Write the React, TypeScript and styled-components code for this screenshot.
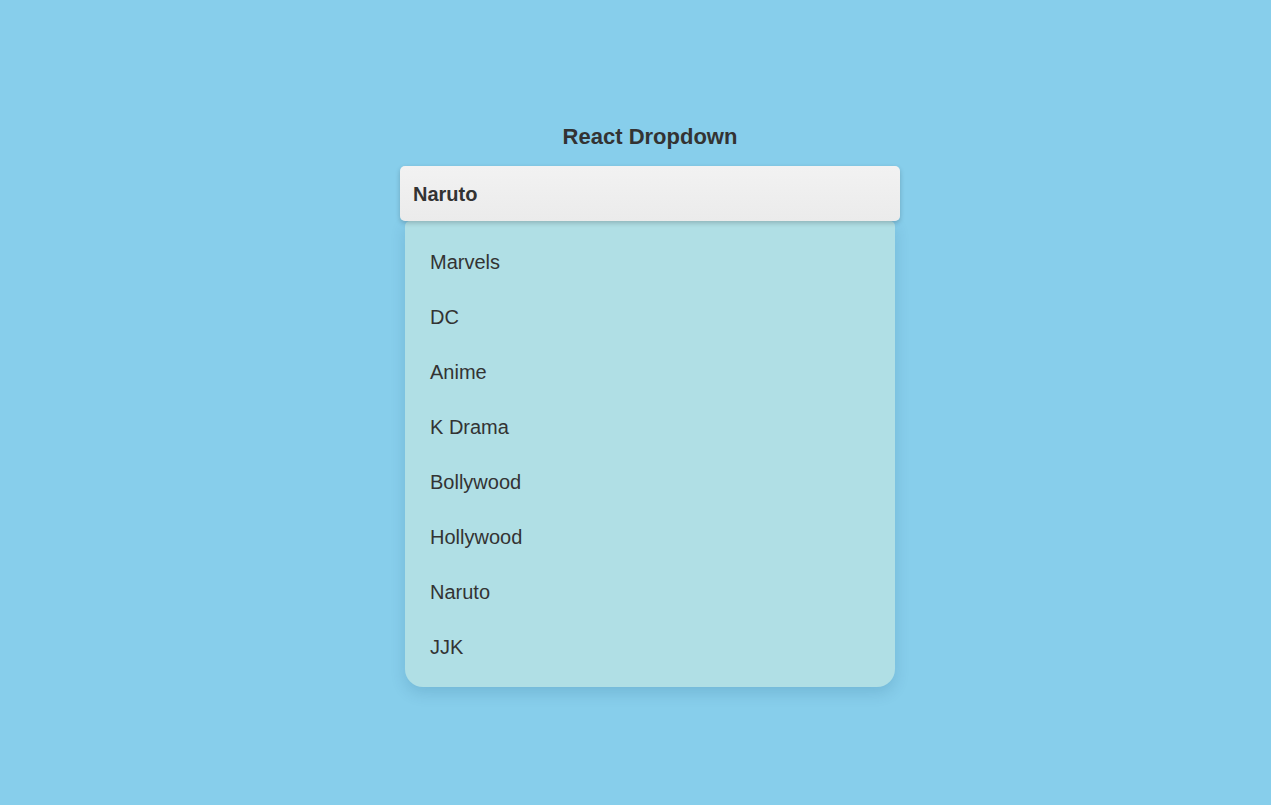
import React, { useState } from "react";
import styled, { createGlobalStyle } from "styled-components";

const Global = createGlobalStyle`
  html, body { margin: 0; padding: 0; background: #87ceeb; }
  body { font-family: "Liberation Sans", Arial, sans-serif; color: #333; min-height: 805px; }
`;

const Page = styled.div`
  display: flex;
  justify-content: center;
  padding: 122px 0 0 29px;
`;

const Wrapper = styled.div`
  width: 500px;
  display: flex;
  flex-direction: column;
`;

const Title = styled.h1`
  margin: 0 0 14px;
  font-size: 22px;
  line-height: 30px;
  font-weight: bold;
  text-align: center;
  color: #333;
`;

const Trigger = styled.button`
  height: 55px;
  width: 100%;
  border: none;
  border-radius: 5px;
  background: linear-gradient(#f2f2f2, #ebebeb);
  box-shadow: 0 2px 5px rgba(0, 0, 0, 0.2);
  padding: 1px 13px 0;
  text-align: left;
  font-family: inherit;
  font-size: 20px;
  font-weight: bold;
  color: #333;
  cursor: pointer;
  position: relative;
  z-index: 1;
`;

const Menu = styled.ul`
  list-style: none;
  margin: 0 5px;
  padding: 14px 0 12px;
  background: #b0dfe5;
  border-radius: 5px 5px 18px 18px;
  box-shadow: 0 6px 15px rgba(0, 60, 100, 0.15);
`;

const Item = styled.li<{ $active?: boolean }>`
  padding: 0 25px;
  height: 55px;
  display: flex;
  align-items: center;
  font-size: 20px;
  color: #333;
  cursor: pointer;
`;

const options = ["Marvels", "DC", "Anime", "K Drama", "Bollywood", "Hollywood", "Naruto", "JJK"];

export default function App() {
  const [selected, setSelected] = useState("Naruto");
  const [open, setOpen] = useState(true);
  return (
    <>
      <Global />
      <Page>
        <Wrapper>
          <Title>React Dropdown</Title>
          <Trigger onClick={() => setOpen(!open)}>{selected}</Trigger>
          {open && (
            <Menu>
              {options.map((o) => (
                <Item key={o} $active={o === selected} onClick={() => setSelected(o)}>
                  {o}
                </Item>
              ))}
            </Menu>
          )}
        </Wrapper>
      </Page>
    </>
  );
}
